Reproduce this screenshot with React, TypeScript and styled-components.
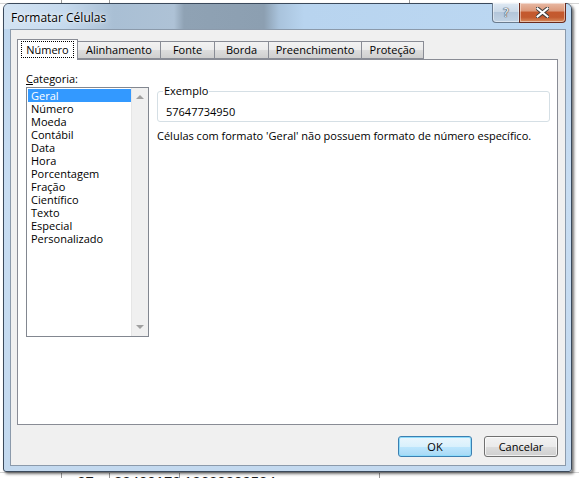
import styled, { createGlobalStyle } from "styled-components";

const GlobalStyle = createGlobalStyle`
    html, body {
        margin: 0;
        padding: 0;
        background: #ffffff;
    }
    * { box-sizing: border-box; }
`;

const UI_FONT = `"Open Sans", "Noto Sans", sans-serif`;

/* excel sheet behind the dialog */
const Sheet = styled.div`
    position: relative;
    width: 579px;
    height: 478px;
    overflow: hidden;
    background: #ffffff;
    font-family: "Liberation Sans", Arial, sans-serif;
    display: flex;
    flex-direction: column;
    justify-content: space-between;
`;

const SheetRow = styled.div<{ $top?: boolean }>`
    display: flex;
    height: 20px;
    margin-top: ${(p) => (p.$top ? "-16px" : "0")};
    margin-bottom: ${(p) => (p.$top ? "0" : "-14px")};
    border-bottom: 1px solid #d4d4d4;
    border-top: 1px solid #d4d4d4;
`;

const SheetCell = styled.div<{ $w: number; $align?: string }>`
    width: ${(p) => p.$w}px;
    flex-shrink: 0;
    border-right: 1px solid #9a9a9a;
    font-size: 15px;
    line-height: 18px;
    padding: 0 4px;
    color: #1a1a1a;
    text-align: ${(p) => p.$align || "left"};
    white-space: nowrap;
    overflow: hidden;
`;

/* window */
const Dialog = styled.div`
    position: absolute;
    left: 3px;
    top: 3px;
    width: 569px;
    height: 469px;
    border: 1px solid #3b4a5c;
    border-radius: 6px 6px 3px 3px;
    background: linear-gradient(180deg, #bcd5ee 0%, #c8ddf2 40%, #c3d9ef 100%);
    box-shadow: 2px 2px 3px rgba(0, 0, 0, 0.55);
    display: flex;
    flex-direction: column;
    font-family: ${UI_FONT};
    font-size: 11px;
    color: #000;
`;

const TitleBar = styled.div`
    height: 27px;
    display: flex;
    align-items: flex-start;
    padding-left: 7px;
    border-radius: 5px 5px 0 0;
    background: linear-gradient(90deg,
        #d2e3f3 0px, #c6daee 60px, #a9bfd4 110px, #aec2d6 170px,
        #8fa2b4 180px, #8c9fb1 260px, #a9c3dc 275px, #b8d4ef 300px, #bcd8f2 100%);
`;

const TitleText = styled.div`
    padding-top: 5px;
    font-size: 12px;
    line-height: 17px;
    color: #000;
    text-shadow: 0 0 6px rgba(255, 255, 255, 0.9), 0 0 2px rgba(255, 255, 255, 0.9);
`;

const CaptionButtons = styled.div`
    margin-left: auto;
    margin-right: 5px;
    margin-top: -1px;
    display: flex;
`;

const CaptionButton = styled.div<{ $close?: boolean }>`
    width: ${(p) => (p.$close ? "47px" : "28px")};
    height: 20px;
    margin-left: ${(p) => (p.$close ? "-1px" : "0")};
    border: 1px solid ${(p) => (p.$close ? "#6b2a1c" : "#6a7b8e")};
    border-top: none;
    border-radius: ${(p) => (p.$close ? "0 0 4px 0" : "0 0 0 4px")};
    background: ${(p) =>
        p.$close
            ? "linear-gradient(180deg, #e8b9a4 0%, #dc9a7c 40%, #c4592e 50%, #c25a2f 75%, #d98d5e 100%)"
            : "linear-gradient(180deg, #dfe9f3 0%, #cbd9e7 45%, #b3c6da 50%, #c2d3e4 100%)"};
    box-shadow: inset 0 0 0 1px rgba(255, 255, 255, 0.45);
    display: flex;
    align-items: center;
    justify-content: center;
`;

const HelpGlyph = styled.span`
    font-family: "DejaVu Sans", sans-serif;
    font-size: 12px;
    line-height: 12px;
    color: #f4f6f8;
    text-shadow: 0 0 1px #3a4756, 0 0 1px #3a4756, 0 0 1px #3a4756;
`;

const Client = styled.div`
    margin: 0 5px 5px 6px;
    flex: 1;
    background: #f0f0f0;
    border: 1px solid #8b9aab;
    display: flex;
    flex-direction: column;
    padding: 9px 7px 8px 6px;
`;

const TabStrip = styled.div`
    display: flex;
    align-items: flex-end;
    height: 20px;
    position: relative;
    z-index: 1;
`;

const Tab = styled.div<{ $active?: boolean; $w: number }>`
    width: ${(p) => p.$w}px;
    height: ${(p) => (p.$active ? "21px" : "18px")};
    margin-bottom: ${(p) => (p.$active ? "-1px" : "0")};
    margin-left: -1px;
    border: 1px solid #898c95;
    border-bottom: ${(p) => (p.$active ? "none" : "1px solid #898c95")};
    background: ${(p) =>
        p.$active
            ? "#ffffff"
            : "linear-gradient(180deg, #f2f2f2 0%, #ebebeb 50%, #dddddd 50%, #cfcfcf 100%)"};
    display: flex;
    justify-content: center;
    padding-top: ${(p) => (p.$active ? "2px" : "0")};
    line-height: 16px;
    white-space: nowrap;

    &:first-child { margin-left: 0; }
`;

const FocusLabel = styled.span`
    outline: 1px dotted #000;
    outline-offset: 0;
    padding: 0 4px;
    height: 15px;
    line-height: 15px;
`;

const Panel = styled.div`
    height: 366px;
    background: #ffffff;
    border: 1px solid #898c95;
    display: flex;
    padding: 11px 8px 0 8px;
    gap: 8px;
`;

const CategoryColumn = styled.div`
    display: flex;
    flex-direction: column;
`;

const FieldLabel = styled.div`
    line-height: 15px;
    margin-bottom: 1px;

    u { text-decoration: underline; }
`;

const ListBox = styled.div`
    width: 123px;
    height: 250px;
    border: 1px solid #828790;
    background: #ffffff;
    display: flex;
`;

const ListItems = styled.div`
    flex: 1;
    padding: 1px 0 0 1px;
`;

const ListItem = styled.div<{ $selected?: boolean }>`
    height: 13px;
    line-height: 13px;
    padding-left: 3px;
    white-space: nowrap;
    background: ${(p) => (p.$selected ? "#3399ff" : "transparent")};
    color: ${(p) => (p.$selected ? "#ffffff" : "#000000")};
`;

const ScrollTrack = styled.div`
    width: 17px;
    background: #f0f0f0;
    border-left: 1px solid #e6e6e6;
    display: flex;
    flex-direction: column;
    justify-content: space-between;
    align-items: center;
    padding: 7px 0 7px;
`;

const Arrow = styled.div<{ $down?: boolean }>`
    width: 0;
    height: 0;
    border-left: 4px solid transparent;
    border-right: 4px solid transparent;
    ${(p) => (p.$down ? "border-top: 4px solid #a0a0a0;" : "border-bottom: 4px solid #a0a0a0;")}
`;

const DetailColumn = styled.div`
    flex: 1;
    display: flex;
    flex-direction: column;
    padding-top: 13px;
    padding-right: 1px;
`;

const GroupBox = styled.fieldset`
    margin: 0;
    padding: 0 0 2px 8px;
    width: 393px;
    height: 38px;
    border: 1px solid #d5dfe5;
    border-radius: 3px;

    legend {
        padding: 0 1px;
        margin-left: -3px;
        line-height: 14px;
    }
`;

const SampleValue = styled.div`
    line-height: 15px;
    margin-top: 6px;
`;

const Description = styled.div`
    margin-top: 6px;
    line-height: 15px;
    white-space: nowrap;
`;

const ButtonRow = styled.div`
    display: flex;
    justify-content: flex-end;
    gap: 12px;
    margin-top: 11px;
    padding-right: 0;
`;

const PushButton = styled.div<{ $default?: boolean }>`
    width: 74px;
    height: 21px;
    border: 1px solid ${(p) => (p.$default ? "#3c7fb1" : "#707070")};
    border-radius: 3px;
    background: ${(p) =>
        p.$default
            ? "linear-gradient(180deg, #eaf6fd 0%, #d9f0fc 50%, #bee6fd 50%, #a7d9f5 100%)"
            : "linear-gradient(180deg, #f2f2f2 0%, #ebebeb 50%, #dddddd 50%, #cfcfcf 100%)"};
    box-shadow: inset 0 0 0 1px ${(p) => (p.$default ? "#8fdcfb" : "rgba(255,255,255,0.7)")};
    display: flex;
    align-items: center;
    justify-content: center;
    line-height: 15px;
`;

const tabs = [
    { label: "Número", w: 61 },
    { label: "Alinhamento", w: 84 },
    { label: "Fonte", w: 55 },
    { label: "Borda", w: 55 },
    { label: "Preenchimento", w: 94 },
    { label: "Proteção", w: 63 },
];

const categories = [
    "Geral", "Número", "Moeda", "Contábil", "Data", "Hora", "Porcentagem",
    "Fração", "Científico", "Texto", "Especial", "Personalizado",
];

export default function App() {
    return (
        <>
            <GlobalStyle />
            <Sheet>
                <SheetRow $top>
                    <SheetCell $w={62} />
                    <SheetCell $w={48} $align="center">32</SheetCell>
                    <SheetCell $w={300}>81124001717:1764773475430</SheetCell>
                    <SheetCell $w={200} />
                </SheetRow>
                <SheetRow>
                    <SheetCell $w={62} />
                    <SheetCell $w={48} $align="center">37</SheetCell>
                    <SheetCell $w={70}>824001797</SheetCell>
                    <SheetCell $w={200}>12623309534</SheetCell>
                    <SheetCell $w={200} />
                </SheetRow>

                <Dialog>
                    <TitleBar>
                        <TitleText>Formatar Células</TitleText>
                        <CaptionButtons>
                            <CaptionButton><HelpGlyph>?</HelpGlyph></CaptionButton>
                            <CaptionButton $close>
                                <svg width="13" height="11" viewBox="0 0 13 11">
                                    <path d="M1.5 1.5 L11.5 9.5 M11.5 1.5 L1.5 9.5" stroke="#3b3b3b" strokeWidth="4" strokeLinecap="square" />
                                    <path d="M1.5 1.5 L11.5 9.5 M11.5 1.5 L1.5 9.5" stroke="#ffffff" strokeWidth="2" strokeLinecap="square" />
                                </svg>
                            </CaptionButton>
                        </CaptionButtons>
                    </TitleBar>

                    <Client>
                        <TabStrip>
                            {tabs.map((t, i) => (
                                <Tab key={t.label} $w={t.w} $active={i === 0}>
                                    {i === 0 ? <FocusLabel>{t.label}</FocusLabel> : t.label}
                                </Tab>
                            ))}
                        </TabStrip>

                        <Panel>
                            <CategoryColumn>
                                <FieldLabel><u>C</u>ategoria:</FieldLabel>
                                <ListBox>
                                    <ListItems>
                                        {categories.map((c, i) => (
                                            <ListItem key={c} $selected={i === 0}>{c}</ListItem>
                                        ))}
                                    </ListItems>
                                    <ScrollTrack>
                                        <Arrow />
                                        <Arrow $down />
                                    </ScrollTrack>
                                </ListBox>
                            </CategoryColumn>

                            <DetailColumn>
                                <GroupBox>
                                    <legend>Exemplo</legend>
                                    <SampleValue>57647734950</SampleValue>
                                </GroupBox>
                                <Description>
                                    Células com formato 'Geral' não possuem formato de número específico.
                                </Description>
                            </DetailColumn>
                        </Panel>

                        <ButtonRow>
                            <PushButton $default>OK</PushButton>
                            <PushButton>Cancelar</PushButton>
                        </ButtonRow>
                    </Client>
                </Dialog>
            </Sheet>
        </>
    );
}
